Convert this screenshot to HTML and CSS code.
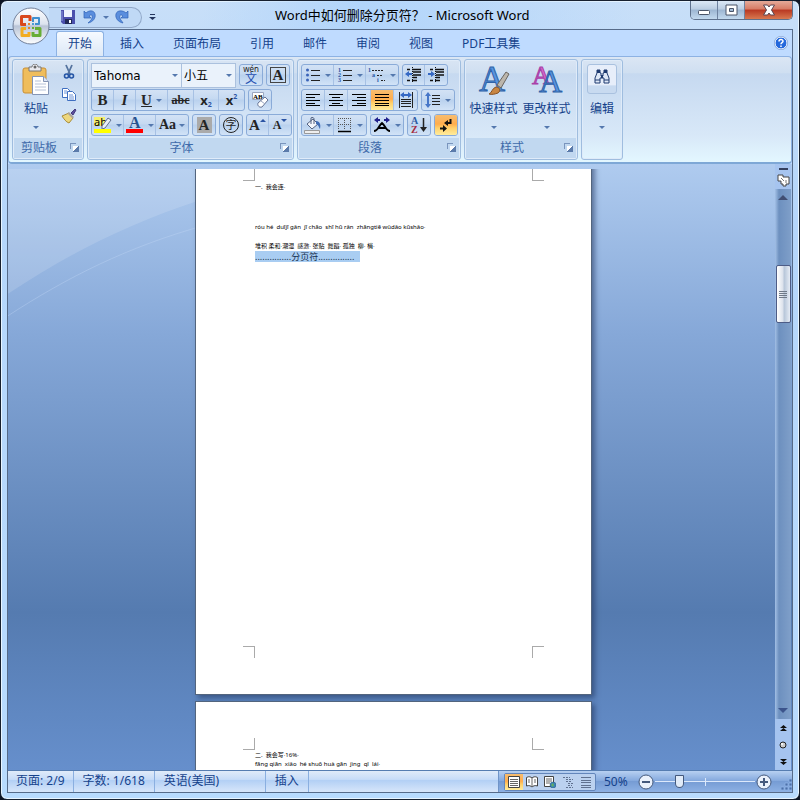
FILE: index.html
```html
<!DOCTYPE html>
<html lang="zh-CN">
<head>
  <meta charset="UTF-8">
  <title>Word中如何删除分页符？ - Microsoft Word</title>
  <link rel="stylesheet" href="styles.css">
</head>
<body>
<div class="window">
  <header class="titlebar">
    <div class="quick">
      <button class="plain" aria-label="保存"><svg width="14" height="14" viewBox="0 0 14 14"><path d="M0 0h14v14H2l-2-2z" fill="#4b50ad"/><path d="M3 0h8v7H3z" fill="#eef4ff"/><path d="M4 9h7v5H4z" fill="#222a58"/><path d="M8 10h2v3H8z" fill="#fff"/><path d="M1 1v10" stroke="#8f9be0"/></svg></button>
      <button class="plain" aria-label="撤消"><svg width="14" height="14" viewBox="0 0 14 14"><path d="M1 1v7h7L6 6c2-2 4-1 3 2-.5 2-2 3-4 5 5-1 8-5 7-9S6 0 3 3z" fill="#5a8ede" stroke="#2f62b4" stroke-width=".7"/></svg></button>
      <i class="caret"></i>
      <button class="plain" aria-label="恢复"><svg width="14" height="14" viewBox="0 0 14 14"><path d="M13 1v7H6l2-2C6 4 4 5 5 8c.5 2 2 3 3 5-5-1-8-5-7-9s7-4 10-1z" fill="#5a8ede" stroke="#2f62b4" stroke-width=".7"/></svg></button>
    </div>
    <button class="plain more" aria-label="自定义快速访问工具栏"><svg width="7" height="7" viewBox="0 0 7 7"><path d="M1 .5h5" stroke="#25365e"/><path d="M0 3h7L3.500 6z" fill="#25365e"/></svg></button>
    <h1>Word中如何删除分页符？ - Microsoft Word</h1>
    <div class="winbtns">
      <button aria-label="最小化"><svg width="14" height="14" viewBox="0 0 14 14"><rect x="1.500" y="7.500" width="11" height="4" rx="1" fill="#fff" stroke="#4a5568"/></svg></button>
      <button aria-label="最大化"><svg width="14" height="14" viewBox="0 0 14 14"><path d="M2 2h11v10H2zM5.500 5.500v3h4v-3z" fill="#fff" fill-rule="evenodd" stroke="#4a5568"/></svg></button>
      <button class="close" aria-label="关闭"><svg width="14" height="14" viewBox="0 0 14 14"><path d="M1.500 2h4l1.500 2 1.500-2h4L9.500 7l3 5h-4L7 10l-1.500 2h-4l3-5z" fill="#fff" stroke="#5a4550"/></svg></button>
    </div>
  </header>

  <button class="orb" aria-label="Office 按钮"><svg width="38" height="38" viewBox="0 0 38 38">
    <defs><linearGradient id="og" x2="0" y2="1"><stop stop-color="#fff"/><stop offset=".45" stop-color="#dce3ee"/><stop offset=".5" stop-color="#b9c4d6"/><stop offset="1" stop-color="#fdfeff"/></linearGradient></defs>
    <circle cx="19" cy="19" r="18" fill="url(#og)" stroke="#72809a"/>
    <g fill="none" stroke-width="3" stroke-linejoin="round">
      <path d="M18 14V9.500H9.500v8H14" stroke="#d9481c"/>
      <path d="M21 15v-4h6v6h-4" stroke="#3f90d0" stroke-width="2"/>
      <path d="M14 21.500h-4v7h7V25" stroke="#f2ac20"/>
      <path d="M23 21.500h5v7h-7V25" stroke="#67ad35"/>
    </g>
    <g fill="#e8832a"><path d="M16 16h2v2h-2z"/><path fill="#4a9bd8" d="M20 16h2v2h-2z"/><path d="M16 20h2v2h-2z"/><path fill="#67ad35" d="M20 20h2v2h-2z"/></g>
  </svg></button>

  <main class="client">
    <nav class="tabs">
      <a href="#" class="tab active">开始</a>
      <a href="#" class="tab">插入</a>
      <a href="#" class="tab">页面布局</a>
      <a href="#" class="tab">引用</a>
      <a href="#" class="tab">邮件</a>
      <a href="#" class="tab">审阅</a>
      <a href="#" class="tab">视图</a>
      <a href="#" class="tab">PDF工具集</a>
      <button class="plain help" aria-label="帮助"><svg width="14" height="14" viewBox="0 0 14 14"><circle cx="7" cy="7" r="6" fill="#2468dc" stroke="#fff"/><circle cx="7" cy="7" r="6.700" fill="none" stroke="#6e90c8" stroke-width=".6"/><path d="M5 5.500C5 3 9 3 9 5.300 9 6.700 7 6.700 7 8.200M7 9.500v1.500" fill="none" stroke="#fff" stroke-width="1.500"/></svg></button>
    </nav>

    <div class="ribbon">
      <section class="group clip">
        <div class="body cliprow">
          <button class="big paste"><svg width="28" height="32" viewBox="0 0 28 32"><rect x="1" y="4" width="23" height="25" rx="2" fill="#efbd5c" stroke="#c98f35"/><path d="M7 3h3c0-4 6-4 6 0h3v4H7z" fill="#e9e9ee" stroke="#777"/><circle cx="13" cy="3" r="1.500" fill="#666"/><path d="M10.500 12.500h11l5 5v13h-16z" fill="#fff" stroke="#8495b5"/><path d="M21.500 12.500v5h5" fill="#dbe4f4" stroke="#8495b5"/><path d="M13 17h6m-6 3h11m-11 3h11m-11 3h11" stroke="#b7c3d8"/></svg><span>粘贴</span><i class="caret"></i></button>
          <div class="small">
            <button class="plain" aria-label="剪切"><svg width="16" height="16" viewBox="0 0 16 16"><path d="M5 1l4 9M11 1L7 10" stroke="#56749f" stroke-width="1.800"/><circle cx="5.500" cy="12" r="2" fill="none" stroke="#2555a5" stroke-width="1.600"/><circle cx="10.500" cy="12" r="2" fill="none" stroke="#2555a5" stroke-width="1.600"/></svg></button>
            <button class="plain" aria-label="复制"><svg width="16" height="16" viewBox="0 0 16 16"><path d="M1.500 2.500h5l3 3v6h-8z" fill="#fff" stroke="#3f6fc0"/><path d="M6.500 5.500h5l3 3v6h-8z" fill="#fff" stroke="#3f6fc0"/><path d="M3 5h3M3 7h3m2 2h4m-4 2h5m-5 2h5" stroke="#6c94d8"/></svg></button>
            <button class="plain" aria-label="格式刷"><svg width="16" height="16" viewBox="0 0 16 16"><path d="M10 5l4-4 1 1-3 5z" fill="#5a4f9a" stroke="#453a80"/><path d="M1 8l7-3 4 5-4 5C5 14 3 11 1 8z" fill="#edd77d" stroke="#a98c38"/><path d="M8 4l5 5-1.500 1.500-5-5z" fill="#aaa39a"/></svg></button>
          </div>
        </div>
        <h2>剪贴板<i class="launch"></i></h2>
      </section>

      <section class="group font">
        <div class="body rows">
          <div class="row">
            <div class="combos"><label class="combo name"><select aria-label="字体"><option>Tahoma</option></select><i class="caret"></i></label><label class="combo size"><select aria-label="字号"><option>小五</option></select><i class="caret"></i></label></div>
            <div class="set"><button aria-label="拼音指南"><span class="wen"><small>wén</small>文</span></button></div>
            <div class="set"><button class="serif boxed" aria-label="字符边框"><span>A</span></button></div>
          </div>
          <div class="row">
            <div class="set">
              <button class="serif">B</button><button class="serif"><em>I</em></button><button class="serif drop"><u>U</u><i class="caret"></i></button><button class="serif strike"><s>abc</s></button><button class="xs" aria-label="下标">x<sub>2</sub></button><button class="xs" aria-label="上标">x<sup>2</sup></button>
            </div>
            <div class="set"><button aria-label="清除格式"><svg width="18" height="18" viewBox="0 0 18 18"><path d="M1.500 1.500h11v7h-11z" fill="#fff" stroke="#9aa6c0"/><text x="2" y="8" class="tiny">AB</text><path d="M7 12l7-6 3 3-6 7c-3 1-5-2-4-4z" fill="#fff" stroke="#667394"/><path d="M10 10l4 3" stroke="#9aa6c0"/></svg></button></div>
          </div>
          <div class="row">
            <div class="set">
              <button class="drop" aria-label="突出显示"><svg width="18" height="18" viewBox="0 0 18 18"><path d="M0 1h11v9H0z" fill="#f5f06e"/><text x="0" y="10" class="ab">ab</text><path d="M8 10l6-8 3 2-6 8-3 1z" fill="#e9eef8" stroke="#5f6f90"/><path d="M0 13h17v4H0z" fill="#ff0"/></svg><i class="caret"></i></button><button class="drop" aria-label="字体颜色"><svg width="18" height="18" viewBox="0 0 18 18"><text x="3" y="12" class="fa">A</text><path d="M0 13h17v4H0z" fill="#f00"/></svg><i class="caret"></i></button><button class="serif drop aa">Aa<i class="caret"></i></button>
            </div>
            <div class="set"><button class="serif shade" aria-label="字符底纹"><span>A</span></button></div>
            <div class="set"><button aria-label="带圈字符"><span class="ring">字</span></button></div>
            <div class="set"><button class="serif big-a" aria-label="增大字体">A<svg width="6" height="14" viewBox="0 0 6 14"><path d="M0 4l3-3 3 3z" fill="#2b54a4"/></svg></button><button class="serif small-a" aria-label="缩小字体">A<svg width="6" height="14" viewBox="0 0 6 14"><path d="M0 1h6L3 4z" fill="#2b54a4"/></svg></button></div>
          </div>
        </div>
        <h2>字体<i class="launch"></i></h2>
      </section>

      <section class="group para">
        <div class="body rows">
          <div class="row">
            <div class="set">
              <button class="drop" aria-label="项目符号"><svg width="16" height="16" viewBox="0 0 16 16"><g fill="#3a63b8"><circle cx="2.500" cy="3" r="1.500"/><circle cx="2.500" cy="8" r="1.500"/><circle cx="2.500" cy="13" r="1.500"/></g><path d="M6 3.500h9M6 8.500h9M6 13.500h9" stroke="#222"/></svg><i class="caret"></i></button><button class="drop" aria-label="编号"><svg width="16" height="16" viewBox="0 0 16 16"><text x="1" y="5" class="num">1</text><text x="1" y="10" class="num">2</text><text x="1" y="15" class="num">3</text><path d="M6 3.500h9M6 8.500h9M6 13.500h9" stroke="#222"/></svg><i class="caret"></i></button><button class="drop" aria-label="多级列表"><svg width="18" height="16" viewBox="0 0 18 16"><text x="0" y="5" class="num">1</text><text x="4" y="10" class="num">a</text><text x="9" y="15" class="num">i</text><path d="M4 3.500h12M9 8.500h6M13 13.500h4" stroke="#222" stroke-dasharray="2 1"/></svg><i class="caret"></i></button>
            </div>
            <div class="set">
              <button aria-label="减少缩进量"><svg width="17" height="16" viewBox="0 0 17 16"><path d="M2 2.500h3m2 0h9M8 5h8M8 8h8M8 10.500h4M2 13.500h3m2 0h5" stroke="#111" stroke-width="1.500"/><path d="M7.500 0v16" stroke="#111" stroke-dasharray="1 1"/><path d="M0 7l4-3v2h3v2H4v2z" fill="#3568c4"/></svg></button><button aria-label="增加缩进量"><svg width="17" height="16" viewBox="0 0 17 16"><path d="M2 2.500h3m2 0h9M8 5h8M8 8h8M8 10.500h4M2 13.500h3m2 0h5" stroke="#111" stroke-width="1.500"/><path d="M7.500 0v16" stroke="#111" stroke-dasharray="1 1"/><path d="M7 7L3 4v2H0v2h3v2z" fill="#3568c4"/></svg></button>
            </div>
          </div>
          <div class="row">
            <div class="set align">
              <button aria-label="左对齐"><svg width="16" height="14" viewBox="0 0 16 14"><path d="M1 1.500h14M1 4.500h9M1 7.500h14M1 10.500h9M1 12.500h14" stroke="#000"/></svg></button><button aria-label="居中"><svg width="16" height="14" viewBox="0 0 16 14"><path d="M1 1.500h14M4 4.500h8M1 7.500h14M4 10.500h8M1 12.500h14" stroke="#000"/></svg></button><button aria-label="右对齐"><svg width="16" height="14" viewBox="0 0 16 14"><path d="M1 1.500h14M6 4.500h9M1 7.500h14M6 10.500h9M1 12.500h14" stroke="#000"/></svg></button><button class="on" aria-label="两端对齐"><svg width="16" height="14" viewBox="0 0 16 14"><path d="M1 1.500h14M1 4.500h14M1 7.500h14M1 10.500h14M1 12.500h14" stroke="#000"/></svg></button><button aria-label="分散对齐"><svg width="16" height="16" viewBox="0 0 16 16"><path d="M1.500 0v16M14.500 0v16M3 7.500h10M3 9.500h10M3 11.500h10M3 14.500h10" stroke="#222"/><path d="M2 3l4-3v2h4V0l4 3-4 3V4H6v2z" fill="#3568c4"/></svg></button>
            </div>
            <div class="set"><button class="drop" aria-label="行距"><svg width="16" height="16" viewBox="0 0 16 16"><path d="M3 0l3 4H4v8h2l-3 4-3-4h2V4H0z" fill="#4676c8"/><path d="M7 3.500h8M7 6.500h8M7 9.500h8M7 12.500h8" stroke="#222"/></svg><i class="caret"></i></button></div>
          </div>
          <div class="row">
            <div class="set">
              <button class="drop" aria-label="底纹"><svg width="18" height="17" viewBox="0 0 18 17"><path d="M3 7l6-5 5 5-6 5z" fill="#f3f6fc" stroke="#53617f"/><path d="M7 7V1c0-1 3-1 3 1v5" fill="none" stroke="#53617f"/><path d="M12 4c4 0 5 4 4 8-1-1-1-4-4-5z" fill="#3f6cb5"/><path d="M.500 13.500h15v3H.500z" fill="#eee" stroke="#999"/></svg><i class="caret"></i></button><button class="drop" aria-label="边框"><svg width="16" height="16" viewBox="0 0 16 16"><path d="M1.500 1v12M7.500 1v12M13.500 1v12M1 1.500h13M1 7.500h13" stroke="#555" stroke-dasharray="1 1"/><path d="M1 14.500h13" stroke="#000" stroke-width="1.500"/></svg><i class="caret"></i></button>
            </div>
            <div class="set"><button class="drop" aria-label="中文版式"><svg width="18" height="16" viewBox="0 0 18 16"><path d="M1 14c4 0 5-6 8-8 3 2 4 8 8 8M5 11h8" fill="none" stroke="#000" stroke-width="2"/><path d="M1 3l4-3v2h2v2H5v2zM17 3l-4-3v2h-2v2h2v2z" fill="#20208c"/></svg><i class="caret"></i></button></div>
            <div class="set"><button aria-label="排序"><svg width="18" height="18" viewBox="0 0 18 18"><text x="1" y="8" class="sort">A</text><text x="1" y="17" class="sort z">Z</text><path d="M13.500 2v11" stroke="#222" stroke-width="1.500"/><path d="M10 11h7l-3.500 5z" fill="#222"/></svg></button></div>
            <div class="set"><button class="on" aria-label="显示/隐藏编辑标记"><svg width="16" height="16" viewBox="0 0 16 16"><path d="M12.500 2v4H9M2 11.500h4" fill="none" stroke="#111" stroke-width="2"/><path d="M10 3v6L6 6zM5 8v7l4-3.500z" fill="#111"/></svg></button></div>
          </div>
        </div>
        <h2>段落<i class="launch"></i></h2>
      </section>

      <section class="group style">
        <div class="body bigs">
          <button class="big"><svg width="32" height="32" viewBox="0 0 32 32"><text x="1" y="27" class="bigletter">A</text><path d="M19 21L28 8l3 2-8 14z" fill="#bcb6ac" stroke="#6a6560"/><path d="M11 30c3-1 3-6 7-7 4 0 5 4 2 6-3 1-6 2-9 1z" fill="#c98642" stroke="#855125"/></svg><span>快速样式</span><i class="caret"></i></button>
          <button class="big"><svg width="32" height="32" viewBox="0 0 32 32"><text x="1" y="20" class="bigletter pink">A</text><text x="8" y="28" class="bigletter second">A</text></svg><span>更改样式</span><i class="caret"></i></button>
        </div>
        <h2>样式<i class="launch"></i></h2>
      </section>

      <section class="group edit">
        <button class="big"><span class="find"><svg width="16" height="16" viewBox="0 0 16 16"><path d="M3 1h3v3h1v3h2V4h1V1h3v3l2 5v5h-5V9H6v5H1V9l2-5z" fill="#dfe8f7" stroke="#1e3a70"/><path d="M3 1h3v3H3zM10 1h3v3h-3zM7 6h2v3H7z" fill="#1e3a70"/><path d="M1 11h5m4 0h5" stroke="#1e3a70"/></svg></span><span>编辑</span><i class="caret"></i></button>
      </section>
    </div>

    <div class="workspace">
      <div class="desk">
        <svg class="swoosh" viewBox="0 0 768 602" preserveAspectRatio="none"><path d="M0 125C60 85 120 55 190 32V0H0z" fill="#fff" opacity=".14"/><path d="M0 147C60 108 120 78 195 57" fill="none" stroke="#c4daf6" opacity=".35"/></svg>
        <article class="page first">
          <i class="mark tl"></i><i class="mark tr"></i><i class="mark bl"></i><i class="mark br"></i>
          <p>一.&nbsp; 我会连·</p>
          <p class="pinyin">róu hé&nbsp; duījī gǎn&nbsp; jī chāo&nbsp; shī hū rǎn&nbsp; zhāngtiē wǔdǎo kūshǎo·</p>
          <p class="words">堆积 柔和·潮湿&nbsp; 感激·&nbsp;张贴&nbsp; 舞蹈·&nbsp;孤独&nbsp; 柳·&nbsp;梢·</p>
          <p class="break"><mark>...............分页符...............</mark></p>
        </article>
        <article class="page">
          <i class="mark tl"></i><i class="mark tr"></i>
          <p>二.&nbsp; 我会写·16%·</p>
          <p>fāng qiān&nbsp; xiǎo&nbsp; hé shuō huà gān&nbsp; jìng&nbsp; qǐ&nbsp; lái·</p>
        </article>
      </div>
      <div class="vscroll">
        <div class="top"><i class="split"></i><button class="plain" aria-label="标尺"><svg width="13" height="13" viewBox="0 0 13 13"><path d="M1 1h5v2h6v7h-3v2H6v-2H4V7H1z" fill="#fff" stroke="#444"/><path d="M4 4l3 3M9 6v3" stroke="#777"/></svg></button></div>
        <div class="track"><button class="plain" aria-label="向上"><i class="up"></i></button><div class="thumb"><i></i></div><button class="plain" aria-label="向下"><i class="down"></i></button></div>
        <div class="browse">
          <button class="plain" aria-label="前一页"><svg width="7" height="8" viewBox="0 0 7 8"><path d="M0 4l3.500-3L7 4zM0 7l3.500-3L7 7z" fill="#111"/></svg></button>
          <button class="plain" aria-label="选择浏览对象"><svg width="8" height="8" viewBox="0 0 8 8"><circle cx="4" cy="4" r="3" fill="#ccc" stroke="#222"/><circle cx="3" cy="3" r="1" fill="#fff"/></svg></button>
          <button class="plain" aria-label="下一页"><svg width="7" height="8" viewBox="0 0 7 8"><path d="M0 1h7L3.500 4zM0 4h7L3.500 7z" fill="#111"/></svg></button>
        </div>
      </div>
    </div>

    <footer class="status">
      <span>页面: 2/9</span><span>字数: 1/618</span><span class="lang">英语(美国)</span><span>插入</span>
      <div class="right">
        <div class="views">
          <button class="on" aria-label="页面视图"><svg width="12" height="12" viewBox="0 0 12 12"><path d="M.500.500h11v11H.500z" fill="#fff" stroke="#444"/><path d="M2 3.500h8M2 5.500h8M2 7.500h8M2 9.500h8" stroke="#666"/></svg></button><button aria-label="阅读版式"><svg width="12" height="12" viewBox="0 0 12 12"><path d="M.500 1.500C3 0 5 1 6 2c1-1 3-2 5.500-.5V10C9 9 7 10 6 11 5 10 3 9 .500 10z" fill="#fff" stroke="#444"/><path d="M6 2v9M2 4h2M2 6h2m4-2h2M8 6h2" stroke="#666"/></svg></button><button aria-label="Web 版式"><svg width="12" height="12" viewBox="0 0 12 12"><path d="M.500.500h9v10h-9z" fill="#fff" stroke="#444"/><path d="M2 3h6M2 5h6M2 7h4" stroke="#666"/><circle cx="9" cy="9" r="3" fill="#3a82b8" stroke="#245780" stroke-width=".5"/><path d="M7 9l2-2 1 2-1 2z" fill="#62b060"/></svg></button><button aria-label="大纲"><svg width="12" height="12" viewBox="0 0 12 12"><path d="M1 1.500h7M4 3.500h7M4 5.500h6M6 7.500h5M6 9.500h4M4 11.500h7" stroke="#60718f" stroke-dasharray="2 1"/></svg></button><button aria-label="普通视图"><svg width="12" height="12" viewBox="0 0 12 12"><path d="M1 1.500h10M1 4.500h10M1 6.500h10M1 9.500h10M1 11.500h10" stroke="#60718f"/></svg></button>
        </div>
        <b>50%</b>
        <button class="zoom" aria-label="缩小"><svg width="16" height="16" viewBox="0 0 16 16"><circle cx="8" cy="8" r="7" fill="#eaf1fb" stroke="#44597c"/><path d="M4 8h8" stroke="#44597c" stroke-width="2"/></svg></button>
        <input type="range" aria-label="显示比例" min="0" max="100" value="22">
        <button class="zoom" aria-label="放大"><svg width="16" height="16" viewBox="0 0 16 16"><circle cx="8" cy="8" r="7" fill="#eaf1fb" stroke="#44597c"/><path d="M4 8h8M8 4v8" stroke="#44597c" stroke-width="2"/></svg></button>
        <svg class="grip" width="11" height="11" viewBox="0 0 11 11"><path d="M8 0h3v3H8zM4 4h3v3H4zM8 4h3v3H8zM0 8h3v3H0zM4 8h3v3H4zM8 8h3v3H8z" fill="#4d71aa" stroke="#8db1e4" stroke-width=".8"/></svg>
      </div>
    </footer>
  </main>
</div>
</body>
</html>
```

FILE: styles.css
```css
* { box-sizing: border-box; }
body { margin: 0; background: #0d1524; font: 12px/16px "Noto Sans", "Noto Sans CJK SC", sans-serif; color: #15428b; }
button, select { font: inherit; color: inherit; }
button { border: 0; padding: 0; margin: 0; background: none; display: flex; align-items: center; justify-content: center; }
svg { display: block; flex: none; }
svg text { font-family: "Liberation Serif", serif; font-weight: bold; }
h1, h2, p { margin: 0; font-weight: normal; }
i { font-style: normal; }

.window { position: relative; height: 100vh; display: flex; flex-direction: column; padding: 0 6px 6px; border: 1px solid #17202f; border-radius: 7px; background: linear-gradient(#c8dff8, #b5d6fb 220px, #b8dbfe); box-shadow: inset 0 0 0 1px #e8f5ff; }
.titlebar { height: 28px; flex: none; display: flex; align-items: center; background: linear-gradient(100deg, transparent 25%, #b2d5fb 45%, transparent 80%); }
.titlebar h1 { flex: 1; margin-left: 119px; font-size: 13px; line-height: 28px; color: #000; white-space: nowrap; }
.quick { display: flex; align-items: center; gap: 8px; height: 21px; margin: 4px 0 0 42px; padding: 0 12px; border: 1px solid #91a8c8; border-left: 0; border-radius: 0 11px 11px 0; background: #c0d9f6; }
.quick .caret { margin: 0 -2px; }
.more { margin: 4px 0 0 7px; }
.winbtns { display: flex; align-self: flex-start; height: 19px; border: 1px solid #5e718c; border-top: 0; border-radius: 0 0 5px 5px; overflow: hidden; }
.winbtns button { width: 27px; background: linear-gradient(#dbe8f6, #bacde2 45%, #9db6d2 50%, #c2d9ee); border-right: 1px solid #6e82a0; }
.winbtns .close { width: 47px; border: 0; background: linear-gradient(#e5aa99, #d77b65 45%, #b93822 50%, #d87950); }
.orb { position: absolute; left: 11px; top: 6px; }

.caret { border: 3px solid transparent; border-top-color: #5478ae; border-bottom: 0; width: 6px; height: 3px; flex: none; }
.client { flex: 1; min-height: 0; display: flex; flex-direction: column; border: 1px solid #566b89; background: #bfdbff; }
.tabs { display: flex; height: 26px; flex: none; padding: 1px 4px 0 48px; align-items: flex-end; }
.tab { height: 25px; padding: 0 13px; border: 1px solid transparent; border-bottom: 0; line-height: 24px; color: #15428b; text-decoration: none; margin-right: 1px; white-space: nowrap; text-align: center; }
.tab:first-child { padding: 0 11px; margin-right: 2px; }
.active { border-color: #8db2e3; border-radius: 3px 3px 0 0; background: linear-gradient(#f6faff, #dce8f6); }
.help { margin: 0 0 6px auto; }

.ribbon { flex: none; display: flex; gap: 3px; height: 108px; padding: 2px 3px; border: 1px solid #8db2e3; border-radius: 4px; border-bottom: 2px solid #7ea8d6; background: linear-gradient(#dbe6f4, #cfdff1 15%, #c6d9f0 16%, #d8e8f8 75%, #e3f7ff); }
.group { display: flex; flex-direction: column; border: 1px solid #9fbddf; border-radius: 3px; box-shadow: inset 0 0 0 1px #dfebf9; overflow: hidden; flex: none; }
.clip { width: 72px; }
.font { width: 207px; }
.para { width: 164px; }
.style { width: 114px; }
.edit { width: 42px; }
.body { flex: 1; min-height: 0; }
.group h2 { display: flex; justify-content: center; align-items: center; flex: none; height: 20px; margin: 0 1px 1px; padding-right: 18px; background: #c1d8f0; color: #3e6aaa; font-size: 12px; line-height: 18px; position: relative; }
.launch { position: absolute; right: 6px; top: 5px; width: 6px; height: 6px; border: 1px solid #7a95bd; border-width: 1px 0 0 1px; }
.launch::after { content: ""; position: absolute; left: 2px; top: 2px; width: 5px; height: 5px; border: 1px solid #5b7bab; border-width: 0 1px 1px 0; background: linear-gradient(135deg, #fff 50%, #5b7bab 55%); }
.cliprow { display: flex; }
.big { flex-direction: column; justify-content: flex-start; padding-top: 4px; color: #15428b; white-space: nowrap; gap: 3px; }
.big span { line-height: 20px; }
.big .caret { margin-top: 4px; }
.paste { width: 46px; }
.small { display: flex; flex-direction: column; gap: 6px; padding: 4px 0 0 2px; }
.bigs { display: flex; }
.bigs .big { width: 53px; padding-left: 4px; }
.edit .big { width: 40px; }
.find { display: flex; width: 30px; height: 30px; justify-content: center; padding-top: 4px; margin-bottom: 2px; border: 1px solid #a9c1df; border-radius: 3px; background: linear-gradient(#e7eefa 70%, #c8daf0 75%); }

.rows { display: flex; flex-direction: column; gap: 3px; padding: 4px 1px 0 3px; }
.row { display: flex; gap: 3px; height: 22px; }
.set { display: flex; border: 1px solid #8aabd8; border-radius: 3px; background: linear-gradient(#d3e2f5, #c5d9f1 45%, #b9d1ee 50%, #d2e3f7); overflow: hidden; flex: none; }
.set button { width: 22px; height: 20px; border-right: 1px solid #a7c1e4; color: #252525; }
.set button:last-child { border-right: 0; }
.set.align button { width: 23px; }
.set .drop { width: 32px; gap: 4px; }
.set .serif { font: bold 15px/20px "Liberation Serif", serif; }
.set .aa { font-size: 14px; gap: 3px; }
.set .strike { width: 26px; font-size: 12px; }
.set .xs { width: 25px; font: bold 13px/20px "Noto Sans", sans-serif; }
.xs sub, .xs sup { font-size: 7px; line-height: 7px; color: #2b54a4; }
.xs sub { align-self: flex-end; padding-bottom: 2px; }
.xs sup { align-self: flex-start; padding-top: 3px; }
.boxed span { width: 16px; height: 16px; border: 1px solid #444; line-height: 15px; }
.shade span { width: 15px; height: 16px; background: #aaa; line-height: 16px; }
.set .small-a { font-size: 12px; }
.combos { display: flex; height: 25px; margin-top: -1px; }
.combo { display: flex; align-items: center; border: 1px solid #abc1de; background: #eaf2fb; padding-right: 3px; }
.combo select { appearance: none; border: 0; background: transparent; width: 100%; padding: 0 2px; color: #000; font-size: 12px; }
.name { width: 91px; }
.size { width: 54px; border-left: 0; }
.name select { font-family: "DejaVu Sans", sans-serif; }
.wen { display: flex; flex-direction: column; line-height: 12px; font-size: 12px; color: #2650b2; align-items: center; }
.wen small { font-size: 8px; line-height: 8px; color: #222; }
.ring { width: 16px; height: 16px; border: 1px solid #222; border-radius: 50%; font-size: 11px; line-height: 13px; text-align: center; }
.on { background: linear-gradient(#f7bd70, #ffad4d 45%, #ffd06b 65%, #ffec9c); }
.tiny { font-size: 7px; }
svg .ab { font-family: "Noto Sans", sans-serif; font-size: 11px; font-weight: normal; }
.fa { font-size: 16px; fill: #27538f; }
.num { font-size: 6px; fill: #2753a4; }
.sort { font-size: 10px; fill: #2f5ca4; }
.z { fill: #a52a3e; }
svg .bigletter { font-size: 36px; font-weight: normal; fill: #5795e0; stroke: #2f62a8; stroke-width: 1px; }
svg .pink { font-size: 26px; fill: #d76bcb; stroke: #a83fa8; }
svg .second { font-size: 32px; }

.workspace { flex: 1; min-height: 0; display: flex; background: linear-gradient(#afcbef, #86a8d8 28%, #557bb0 74%, #668fcc); }
.desk { position: relative; flex: 1; margin-top: 5px; padding-left: 4px; overflow: hidden; display: flex; flex-direction: column; align-items: center; gap: 6px; }
.swoosh { position: absolute; inset: 0; width: 100%; height: 100%; }
.page { position: relative; flex: none; width: 397px; height: 563px; padding: 48px 59px; background: #fff; border: 1px solid #53657e; box-shadow: 3px 3px 5px rgba(30, 50, 90, .55); color: #000; font-size: 6px; line-height: 9px; }
.first { margin-top: -37px; }
.page p { white-space: nowrap; }
.first p:nth-of-type(1) { padding-top: 2px; }
.page .pinyin { padding-top: 31px; }
.page .words { padding-top: 10px; }
.page .break { font-size: 9px; line-height: 11px; padding-top: 0; }
.page mark { display: inline-block; background: #a9cdf2; color: #17304f; padding-right: 6px; }
.page:last-child p:nth-of-type(1) { padding-top: 1px; }
.mark { position: absolute; width: 12px; height: 12px; border: 0 solid #aaa; }
.tl { left: 47px; top: 36px; border-width: 0 1px 1px 0; }
.tr { right: 47px; top: 36px; border-width: 0 0 1px 1px; }
.bl { left: 47px; bottom: 36px; border-width: 1px 1px 0 0; }
.br { right: 47px; bottom: 36px; border-width: 1px 0 0 1px; }

.vscroll { width: 16px; margin-right: 1px; flex: none; display: flex; flex-direction: column; background: #a6c4ef; }
.top { display: flex; flex-direction: column; align-items: center; gap: 4px; height: 25px; padding-top: 4px; }
.split { width: 9px; height: 2px; background: #34415f; flex: none; }
.track { flex: 1; display: flex; flex-direction: column; align-items: center; background: linear-gradient(90deg, #a2bfe5, #6d90bf 25%, #7f9fc9); }
.track > button { height: 17px; }
.track > button:last-child { margin-top: auto; }
.up { border: 5px solid transparent; border-top: 0; border-bottom-color: #414e72; }
.down { border: 5px solid transparent; border-bottom: 0; border-top-color: #3c548c; }
.thumb { display: flex; align-items: center; justify-content: center; width: 15px; height: 58px; margin-top: 59px; border: 1px solid #4d5c86; border-radius: 2px; background: linear-gradient(90deg, #fff, #dce2ec 45%, #b7c6d9 55%, #e6ecf5); }
.thumb i { width: 8px; height: 7px; background: repeating-linear-gradient(#6f7a88 0 1px, transparent 1px 2px); }
.browse { display: flex; flex-direction: column; justify-content: space-around; align-items: center; height: 51px; }

.status { height: 22px; flex: none; display: flex; border-top: 1px solid #567db1; background: linear-gradient(#e0ebf9, #c7dcf8 40%, #b3d0f5 45%, #d7e6fa); }
.status > span { padding: 0 9px; line-height: 20px; border-right: 1px solid #8aafe0; white-space: nowrap; }
.status > span:first-child { padding: 0 8px; }
.status > .lang { width: 111px; }
.right { display: flex; align-items: center; margin-left: auto; padding: 0 0 0 5px; border-left: 1px solid #6f94c8; background: linear-gradient(#b7d0f1, #86aade 45%, #769cd4 50%, #8db1e4); }
.views { display: flex; border: 1px solid #6386bb; border-radius: 2px; background: #bbd1ef; }
.views button { width: 18px; height: 16px; }
.right b { width: 41px; padding-left: 8px; font-weight: normal; }
.zoom { width: 18px; }
.right input { appearance: none; width: 100px; height: 16px; margin: 0; background: linear-gradient(#dce9fb, #dce9fb) center / 100% 1px no-repeat, linear-gradient(#dce9fb, #dce9fb) center / 1px 8px no-repeat; }
.right input::-webkit-slider-thumb { appearance: none; width: 9px; height: 13px; background: #e1ebf8; border: 1px solid #44597c; border-radius: 1px 1px 5px 5px; }
.grip { margin: 6px 0 0 8px; }
```
